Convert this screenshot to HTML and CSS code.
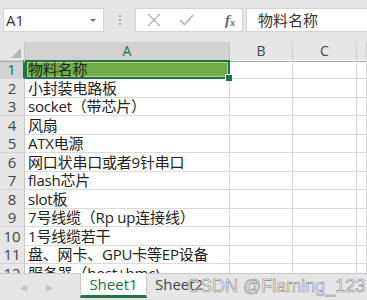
FILE: index.html
```html
<!DOCTYPE html>
<html lang="zh">
<head>
    <meta charset="UTF-8">
    <title>物料清单</title>
    <link rel="stylesheet" href="styles.css">
</head>
<body>
    <div class="bar">
        <div class="name-box">
            <span>A1</span>
            <i class="drop"></i>
        </div>
        <div class="dots"><b></b><b></b><b></b></div>
        <div class="fx-box">
            <svg width="14" height="14" viewBox="0 0 14 14"><path d="M1 1L13 13M13 1L1 13" stroke="#b5b5b5" stroke-width="1.4" fill="none"/></svg>
            <svg width="15" height="12" viewBox="0 0 15 12"><path d="M1 6L5.5 10.5L14 1" stroke="#b5b5b5" stroke-width="1.6" fill="none"/></svg>
            <span class="fx">f<sub>x</sub></span>
        </div>
        <div class="input">物料名称</div>
    </div>

    <div class="sheet">
        <div class="corner"><i></i></div>
        <div class="col on">A</div>
        <div class="col">B</div>
        <div class="col">C</div>
        <div class="col"></div>
    </div>
    <div class="rows" id="rows"></div>

    <div class="tabs">
        <span class="arr">&#9664;</span>
        <span class="arr">&#9654;</span>
        <span class="tab on">Sheet1</span>
        <span class="tab">Sheet2</span>
        <span class="mark">CSDN @Flaming_123</span>
    </div>

    <script>
        // 表格里的物料名称
        var items = ["物料名称","小封装电路板","socket（带芯片）","风扇","ATX电源","网口状串口或者9针串口","flash芯片","slot板","7号线缆（Rp up连接线）","1号线缆若干","盘、网卡、GPU卡等EP设备","服务器（host+bmc)"];
        var rows = document.getElementById("rows");
        for (var i = 0; i < items.length; i++) {
            var r = document.createElement("div");
            r.className = i % 2 == 0 ? "row tall" : "row";
            if (i == 0) r.className += " sel";
            r.innerHTML = '<div class="num">' + (i + 1) + '</div><div class="cell a"><span>' + items[i] + '</span></div><div class="cell"></div><div class="cell"></div><div class="cell"></div>';
            rows.appendChild(r);
        }
    </script>
</body>
</html>
```

FILE: styles.css
```css
body{
    margin: 0;
    width: 367px;
    height: 300px;
    overflow: hidden;
    background: #fff;
    font-family: "Open Sans", "Noto Sans CJK SC", sans-serif;
    position: relative;
}
.bar{
    height: 42px;
    box-sizing: border-box;
    padding: 8px 0 0 3px;
    background: #e6e6e6;
    display: flex;
    align-items: flex-start;
}
.name-box{
    width: 101px;
    height: 24px;
    box-sizing: border-box;
    background: #fff;
    border: 1px solid #d4d4d4;
    display: flex;
    align-items: center;
    justify-content: space-between;
    padding: 0 7px 0 2px;
    font-size: 15px;
    color: #333;
}
.drop{
    width: 0;
    height: 0;
    border-left: 3px solid transparent;
    border-right: 3px solid transparent;
    border-top: 3px solid #777;
}
.dots{
    width: 31px;
    height: 24px;
    display: flex;
    flex-direction: column;
    align-items: center;
    justify-content: center;
    gap: 2px;
}
.dots b{
    width: 2px;
    height: 2px;
    background: #a8a8a8;
}
.fx-box{
    width: 108px;
    height: 24px;
    box-sizing: border-box;
    background: #fff;
    border: 1px solid #d4d4d4;
    display: flex;
    align-items: center;
    padding: 0 0 0 11px;
    gap: 18px;
}
.fx{
    font-family: "Liberation Serif", serif;
    font-style: italic;
    font-weight: bold;
    font-size: 15px;
    color: #666;
    margin-left: 13px;
    line-height: 1;
}
.fx sub{
    font-size: 10px;
    vertical-align: -1px;
}
.input{
    flex: 1;
    height: 24px;
    box-sizing: border-box;
    margin-left: 3px;
    background: #fff;
    border: 1px solid #d4d4d4;
    border-right: 0;
    padding-left: 11px;
    font-size: 15px;
    line-height: 22px;
    color: #333;
}
.sheet{
    display: grid;
    grid-template-columns: 25px 205px 63px 64px 10px;
    height: 18px;
    background: #e6e6e6;
}
.corner{
    position: relative;
    border-right: 1px solid #c8c8c8;
    border-bottom: 1px solid #ababab;
}
.corner i{
    position: absolute;
    right: 3px;
    bottom: 3px;
    width: 0;
    height: 0;
    border-left: 10px solid transparent;
    border-bottom: 10px solid #b4b4b4;
}
.col{
    text-align: center;
    font-size: 14px;
    line-height: 18px;
    color: #444;
    border-right: 1px solid #d0d0d0;
    border-bottom: 1px solid #ababab;
    box-sizing: border-box;
}
.col.on{
    background: #d2d2d2;
    color: #217346;
    border-bottom: 2px solid #217346;
    border-right-color: #c0c0c0;
}
.rows{
    height: 213px;
    overflow: hidden;
}
.row{
    display: grid;
    grid-template-columns: 25px 205px 63px 64px 10px;
    height: 18px;
}
.row.tall{
    height: 19px;
}
.num{
    background: #e6e6e6;
    border-right: 1px solid #c8c8c8;
    border-bottom: 1px solid #d4d4d4;
    box-sizing: border-box;
    text-align: center;
    font-size: 15px;
    line-height: 18px;
    color: #444;
}
.sel .num{
    background: #d2d2d2;
    color: #217346;
    border-right: 2px solid #217346;
}
.cell{
    border-right: 1px solid #dadada;
    border-bottom: 1px solid #dadada;
    box-sizing: border-box;
    font-size: 15px;
    line-height: 18px;
    color: #222;
    white-space: nowrap;
    overflow: visible;
}
.cell.a{
    padding-left: 3px;
    letter-spacing: -0.2px;
}
.sel .cell.a{
    position: relative;
    background: #70ad47;
    border: 2px solid #217346;
    box-shadow: inset 0 0 0 1px #a9d08e;
    padding-left: 1px;
    line-height: 15px;
}
.sel .cell.a::after{
    content: "";
    position: absolute;
    right: -5px;
    bottom: -5px;
    width: 6px;
    height: 6px;
    background: #217346;
    border: 1px solid #fff;
}
.tabs{
    height: 27px;
    background: #e6e6e6;
    border-top: 1px solid #c8c8c8;
    display: flex;
    align-items: flex-start;
    position: relative;
}
.arr{
    font-size: 8px;
    color: #c4c4c4;
    margin: 8px 0 0 20px;
}
.arr + .arr{
    margin-left: 17px;
}
.tab{
    font-family: "Open Sans", sans-serif;
    font-size: 15px;
    color: #444;
    padding: 0 8px;
    line-height: 22px;
    margin-top: -1px;
}
.tab.on{
    margin-left: 27px;
    background: #fff;
    color: #217346;
    width: 67px;
    box-sizing: border-box;
    text-align: center;
    border-bottom: 3px solid #217346;
    border-left: 1px solid #c8c8c8;
    border-right: 1px solid #c8c8c8;
}
.mark{
    position: absolute;
    left: 187px;
    top: 2px;
    font-family: "Liberation Sans", sans-serif;
    font-size: 18px;
    color: rgba(255,255,255,0.7);
    -webkit-text-stroke: 0.6px #8c8c8c;
}
```
